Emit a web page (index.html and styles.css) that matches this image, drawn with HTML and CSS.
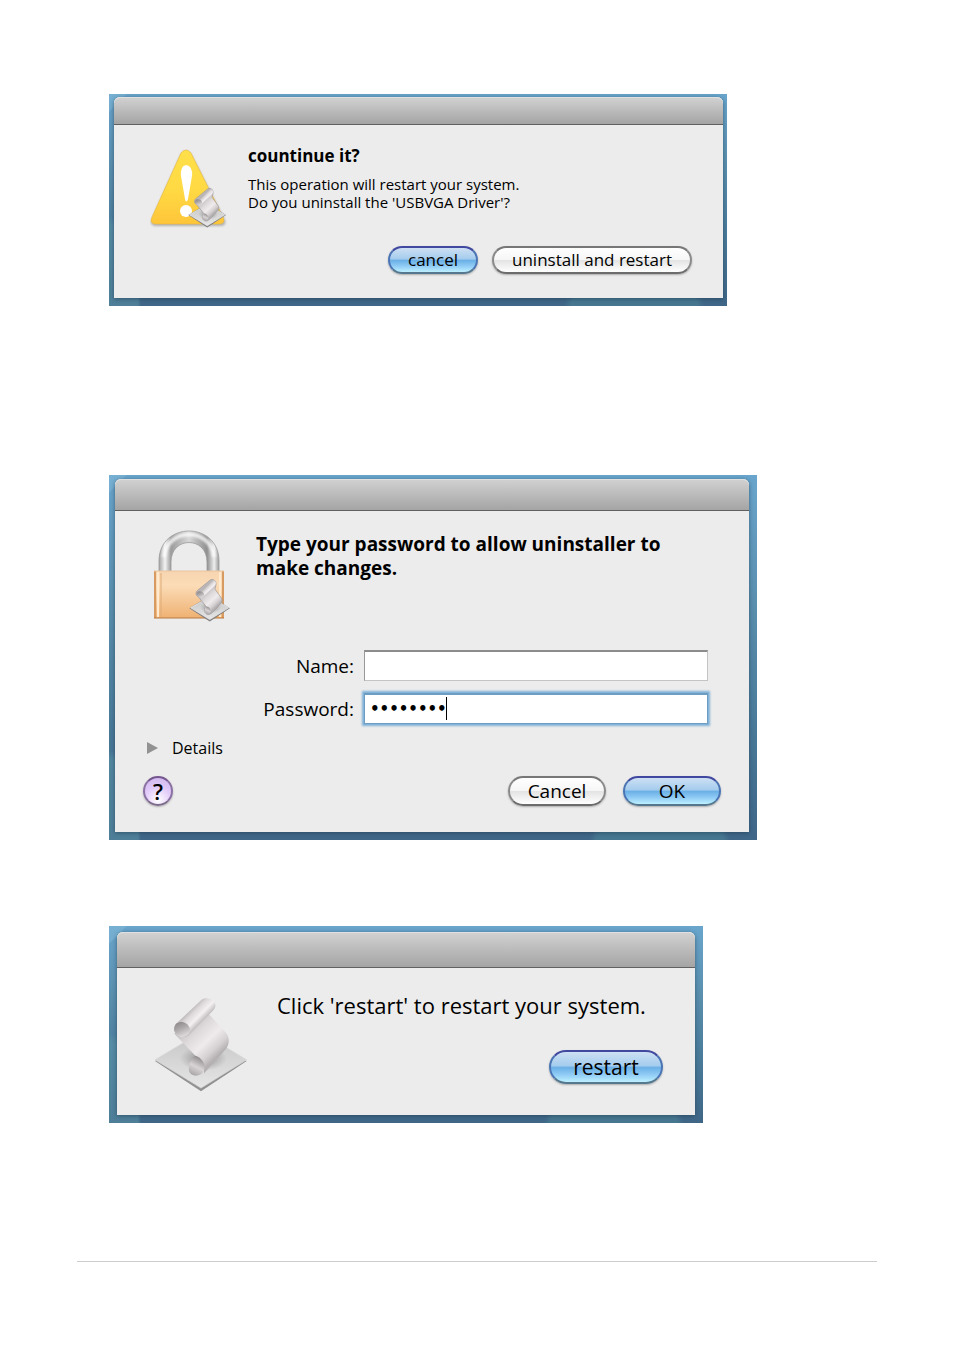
FILE: index.html
```html
<!DOCTYPE html>
<html lang="en">
<head>
<meta charset="utf-8">
<title>Uninstaller dialogs</title>
<link rel="stylesheet" href="styles.css">
</head>
<body>
<svg class="defs" width="0" height="0" aria-hidden="true">
  <defs>
    <linearGradient id="plate" x1="0" y1="0" x2="0" y2="1"><stop offset="0" stop-color="#c4c4c4"/><stop offset="1" stop-color="#e6e6e6"/></linearGradient>
    <linearGradient id="sheet" gradientUnits="userSpaceOnUse" x1="115" y1="110" x2="215" y2="215"><stop offset="0" stop-color="#bdb9ba"/><stop offset=".35" stop-color="#dedadb"/><stop offset=".62" stop-color="#efebec"/><stop offset=".85" stop-color="#d5d0d1"/><stop offset="1" stop-color="#b5b1b2"/></linearGradient>
    <linearGradient id="roll" gradientUnits="userSpaceOnUse" x1="132" y1="72" x2="172" y2="112"><stop offset="0" stop-color="#b9b5b6"/><stop offset=".25" stop-color="#dcd8d9"/><stop offset=".6" stop-color="#f4f0f1"/><stop offset="1" stop-color="#b5b0b1"/></linearGradient>
    <linearGradient id="curl" x1="0" y1="0" x2=".5" y2="1"><stop offset="0" stop-color="#858182"/><stop offset=".5" stop-color="#aaa6a7"/><stop offset="1" stop-color="#dad6d7"/></linearGradient>
    <linearGradient id="foot" x1=".7" y1="0" x2=".3" y2="1"><stop offset="0" stop-color="#858182"/><stop offset=".55" stop-color="#d8d4d5"/><stop offset="1" stop-color="#a9a5a6"/></linearGradient>
    <radialGradient id="shade"><stop offset="0" stop-color="#555" stop-opacity=".65"/><stop offset="1" stop-color="#777" stop-opacity="0"/></radialGradient>
    <linearGradient id="yellow" x1="0" y1="0" x2="0" y2="1"><stop offset="0" stop-color="#ffe04a"/><stop offset=".55" stop-color="#ffd943"/><stop offset="1" stop-color="#fec53a"/></linearGradient>
    <linearGradient id="brass" x1="0" y1="0" x2="0" y2="1"><stop offset="0" stop-color="#f6d5b0"/><stop offset=".3" stop-color="#fbdcb7"/><stop offset="1" stop-color="#efb172"/></linearGradient>
    <linearGradient id="steel" x1="0" y1="0" x2="1" y2="0"><stop offset="0" stop-color="#a2a2a2"/><stop offset=".1" stop-color="#f4f4f4"/><stop offset=".2" stop-color="#9b9b9b"/><stop offset=".5" stop-color="#d8d8d8"/><stop offset=".8" stop-color="#8f8f8f"/><stop offset=".92" stop-color="#efefef"/><stop offset="1" stop-color="#9b9b9b"/></linearGradient>
    <filter id="soft" x="-20%" y="-20%" width="140%" height="140%"><feGaussianBlur stdDeviation="1"/></filter>
    <symbol id="script" viewBox="22 30 290 292">
      <path d="M27 228 167 142 306 228 167 320Z" fill="#919191"/>
      <path d="M27 224 167 140 306 224 167 310Z" fill="url(#plate)" stroke="#d9d9d9" stroke-width="2"/>
      <ellipse cx="174" cy="220" rx="72" ry="38" fill="url(#shade)"/>
      <path d="M86 145 150 212C165 220 178 235 176 266L240 194C256 176 254 155 242 141L190 84 130 98Z" fill="url(#sheet)"/>
      <path d="M150 212C138 218 129 238 130 255C132 270 150 277 165 269C174 264 180 252 177 240C173 225 162 215 150 212Z" fill="url(#foot)"/>
      <path d="M96 110 168 42C178 33 200 36 208 48C214 58 210 68 203 75L134 145C125 157 110 158 98 150C82 140 82 122 96 110Z" fill="url(#roll)"/>
      <path d="M92 114C106 103 128 110 133 128C135 140 130 148 122 150C110 158 84 148 85 130C86 123 88 118 92 114Z" fill="url(#curl)"/>
    </symbol>
    <symbol id="badge" viewBox="10 0 310 330">
      <path d="M14 226 167 132 318 226 167 326Z" fill="#7d7d7d"/>
      <path d="M24 224 167 140 308 224 167 312Z" fill="url(#plate)" stroke="#f4f4f4" stroke-width="5"/>
      <ellipse cx="174" cy="220" rx="80" ry="44" fill="url(#shade)"/>
      <path d="M80 140 140 214C124 228 120 272 158 274C170 274 184 262 196 250L256 184C262 172 260 160 254 150L206 84 214 50C216 20 196 4 172 14L72 96C58 110 64 134 80 140Z" fill="url(#sheet)" stroke="#9a9697" stroke-width="5"/>
      <path d="M80 100 176 18C190 8 208 16 212 34C214 46 208 58 200 66L124 134Z" fill="url(#roll)"/>
      <path d="M70 110C82 92 116 98 124 118C130 136 118 150 100 148C78 146 62 130 70 110Z" fill="url(#curl)"/>
      <path d="M142 214C128 226 124 262 150 268C166 270 178 254 174 240C170 226 156 214 142 214Z" fill="url(#foot)"/>
    </symbol>
  </defs>
</svg>
<main class="page">
  <section class="shot shot-confirm">
    <div class="window">
      <div class="titlebar"></div>
      <div class="content">
        <svg class="icon" viewBox="0 0 78 80" role="img" aria-label="Warning">
          <path d="M31 5Q36-2 41 5L75 71Q77 77 70 77L5 77Q-1 76 2 70Z" fill="#8a8a8a" opacity=".6" filter="url(#soft)"/>
          <path d="M31 4Q36-2 41 4L73 68Q76 75 69 75L6 75Q-1 75 2 68Z" fill="url(#yellow)" stroke="#e9b93a" stroke-width=".6"/>
          <path d="M36 16Q43 17 42 27L38 50Q36 55 35 50L31 27Q30 17 36 16Z" fill="#fff"/>
          <circle cx="36" cy="62" r="6" fill="#fff"/>
          <use href="#badge" x="37" y="38" width="40" height="41"/>
        </svg>
        <div class="message">
          <h2>countinue it?</h2>
          <p>This operation will restart your system.<br>Do you uninstall the 'USBVGA Driver'?</p>
        </div>
        <div class="actions">
          <button class="primary" type="button">cancel</button>
          <button type="button">uninstall and restart</button>
        </div>
      </div>
    </div>
  </section>

  <section class="shot shot-auth">
    <div class="window">
      <div class="titlebar"></div>
      <form class="content">
        <svg class="icon" viewBox="0 0 82 94" role="img" aria-label="Lock">
          <path d="M1 90H80" stroke="#777" stroke-width="3" opacity=".6" filter="url(#soft)"/>
          <path d="M9 43V32C9-8 69-8 69 32V43H57V33C57 7 21 7 21 33V43Z" fill="url(#steel)" stroke="#9a9a9a" stroke-width=".8"/>
          <path d="M14 28C17-2 61-2 64 28" fill="none" stroke="#fff" stroke-width="4" opacity=".75" filter="url(#soft)"/>
          <rect x="4" y="42" width="70" height="47" rx="1" fill="url(#brass)"/>
          <path d="M5 42V89M73 42V89" stroke="#d79a61" stroke-width="2"/>
          <path d="M8 43V88M70 43V88" stroke="#ffe9cf" stroke-width="2"/>
          <path d="M11 44V88" stroke="#deab76"/>
          <path d="M4 42H74" stroke="#e9c69f"/>
          <path d="M4 89H74" stroke="#b9783e"/>
          <use href="#badge" x="38" y="49" width="43" height="44"/>
        </svg>
        <h2>Type your password to allow uninstaller to make changes.</h2>
        <div class="fields">
          <label for="name">Name:</label>
          <input id="name" type="text">
          <label for="password">Password:</label>
          <div class="secret">
            <input id="password" type="password" value="password">
            <span class="caret"></span>
          </div>
        </div>
        <details>
          <summary><svg viewBox="0 0 11 12" width="11" height="12" aria-hidden="true"><path d="M0 0 11 6 0 12Z" fill="#929292"/></svg>Details</summary>
        </details>
        <div class="footer">
          <button class="help" type="button" aria-label="Help">?</button>
          <div class="actions">
            <button type="button">Cancel</button>
            <button class="primary" type="submit">OK</button>
          </div>
        </div>
      </form>
    </div>
  </section>

  <section class="shot shot-restart">
    <div class="window">
      <div class="titlebar"></div>
      <div class="content">
        <svg class="icon" role="img" aria-label="Script"><use href="#script"/></svg>
        <p>Click 'restart' to restart your system.</p>
        <div class="actions">
          <button class="primary" type="button">restart</button>
        </div>
      </div>
    </div>
  </section>
  <hr>
</main>
</body>
</html>
```
FILE: styles.css
```css
* { box-sizing: border-box; }

body {
  margin: 0;
  background: #fff;
  color: #000;
  font-family: "Open Sans", "Noto Sans", sans-serif;
}

.defs { position: absolute; }

.page { padding: 94px 77px 64px; }

h2, p { margin: 0; }

hr {
  margin: 138px 0 0;
  border: 0;
  border-top: 1px solid #ccc;
}

.shot {
  margin-left: 32px;
  background:
    linear-gradient(135deg, #8fc4de55 0 12px, transparent 13px),
    radial-gradient(ellipse 70px 30px at 85% 100%, #4f8a9a77 90%, transparent),
    radial-gradient(ellipse 32px 90px at 0 100%, #5f9aac77 90%, transparent),
    linear-gradient(#69a5cc, #5a8fae 35%, #4b7c9b 65%, #3f6687);
}

.shot-confirm { max-width: 618px; padding: 3px 4px 8px 5px; }
.shot-auth { max-width: 648px; margin-top: 169px; padding: 4px 8px 8px 6px; }
.shot-restart { max-width: 594px; margin-top: 86px; padding: 6px 8px 8px; }

.window {
  border-radius: 6px 6px 0 0;
  background: #ececec;
  box-shadow: 0 1px 4px 0 #1c3a5099;
}

.titlebar {
  border-radius: 6px 6px 0 0;
  border-bottom: 1px solid #606060;
  background: linear-gradient(#d2d2d2, #a4a4a4);
  box-shadow: inset 0 1px #e0e0e0;
}

.shot-confirm .titlebar { height: 28px; }
.shot-auth .titlebar { height: 32px; }
.shot-restart .titlebar { height: 36px; }

.content { display: grid; }

.actions { display: flex; justify-content: flex-end; }

button {
  padding: 0;
  border: 2px solid #777;
  border-color: #777 #8a8a8a #6c6c6c;
  border-radius: 18px;
  background: linear-gradient(#fff, #f6f6f6 48%, #e4e4e4 52%, #fff);
  box-shadow: 0 1px 2px #0004;
  color: #000;
  font-family: inherit;
}

.primary {
  border-color: #4048a0 #4a74b4 #55788f;
  background: linear-gradient(#cddff3, #a5cdee 45%, #6bb0e6 52%, #8fcbf5 75%, #bdf0ff);
}

/* Confirmation */
.shot-confirm .content {
  grid-template-columns: 78px 1fr;
  column-gap: 20px;
  padding: 20px 31px 24px 36px;
}
.shot-confirm .icon { width: 78px; height: 80px; margin-top: 4px; }
.shot-confirm h2 { font-size: 17px; line-height: 22px; }
.shot-confirm p { margin-top: 8px; font-size: 15px; line-height: 18px; }
.shot-confirm .actions { grid-column: 1 / -1; gap: 14px; margin-top: 17px; }
.shot-confirm button { height: 28px; padding: 0 18px; font-size: 17px; line-height: 22px; }

/* Authentication */
.shot-auth .content {
  grid-template-columns: 82px 1fr;
  column-gap: 31px;
  padding: 18px 28px 26px;
}
.shot-auth .icon { width: 82px; height: 94px; margin-left: 7px; }
.shot-auth h2 { max-width: 440px; padding-top: 3px; font-size: 19px; line-height: 24px; }

.fields {
  grid-column: 1 / -1;
  display: grid;
  grid-template-columns: 211px 1fr;
  gap: 12px 10px;
  margin: 27px 13px 0 0;
  align-items: center;
}
.fields label { font-size: 19px; line-height: 24px; text-align: right; }
.fields input {
  display: block;
  width: 100%;
  height: 31px;
  padding: 0 5px;
  border: 1px solid #c4c4c4;
  border-top: 2px solid #8c8c8c;
  border-left-color: #999;
  border-radius: 0;
  background: #fff;
  font: 16px "DejaVu Sans", sans-serif;
  outline: 0;
}
.secret { position: relative; }
.fields .secret input {
  border: 1px solid #6d9dc3;
  border-top-width: 2px;
  box-shadow: 0 0 2px 2px #7fb0d8;
  font-size: 15px;
  font-weight: 700;
}
.caret {
  position: absolute;
  top: 4px;
  left: 82px;
  width: 1px;
  height: 23px;
  background: #000;
}

details { grid-column: 1 / -1; margin: 13px 0 0 4px; font-size: 16px; line-height: 22px; }
summary { display: flex; align-items: center; gap: 14px; list-style: none; }

.footer {
  grid-column: 1 / -1;
  display: flex;
  justify-content: space-between;
  margin-top: 17px;
}
.shot-auth .actions { gap: 17px; }
.shot-auth .actions button { width: 98px; height: 30px; font-size: 19px; line-height: 24px; }
.shot-auth .help {
  width: 30px;
  height: 30px;
  border-color: #75568f #8a70a3 #7d6b8c;
  background: radial-gradient(circle at 50% 85%, #fff, #e2ccfa 50%, #cdb3ec);
  font-size: 22px;
  font-weight: 600;
  line-height: 24px;
}

/* Restart */
.shot-restart .content {
  grid-template-columns: 96px 1fr;
  grid-template-rows: auto 1fr;
  column-gap: 28px;
  padding: 23px 32px 23px 36px;
}
.shot-restart .icon { grid-row: 1 / 3; width: 96px; height: 96px; margin-top: 5px; }
.shot-restart p { font-size: 22px; line-height: 28px; }
.shot-restart .actions { margin-top: 31px; align-items: flex-start; }
.shot-restart button { width: 114px; height: 34px; font-size: 21px; line-height: 28px; }
```
